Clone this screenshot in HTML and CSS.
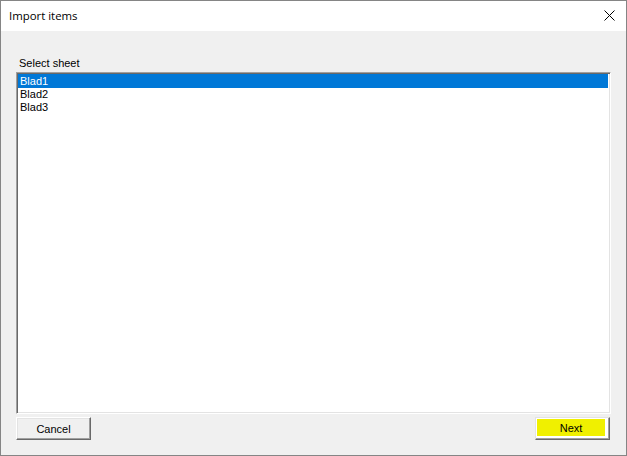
FILE: index.html
```html
<!DOCTYPE html>
<html>
<head>
<meta charset="utf-8">
<link rel="stylesheet" href="styles.css">
</head>
<body>
<div class="window">
  <div class="titlebar">
    <span class="title">Import items</span>
    <svg class="close" width="11" height="11" viewBox="0 0 11 11"><path d="M0.5 0.5 L10.5 10.5 M10.5 0.5 L0.5 10.5" stroke="#000" stroke-width="1" fill="none"/></svg>
  </div>
  <div class="client">
    <div class="label">Select sheet</div>
    <div class="listbox">
      <div class="item selected">Blad1</div>
      <div class="item">Blad2</div>
      <div class="item">Blad3</div>
    </div>
    <div class="buttons">
      <div class="btn">Cancel</div>
      <div class="btn next"><span class="face">Next</span></div>
    </div>
  </div>
</div>
</body>
</html>
```
FILE: styles.css
```css
html, body {
  margin: 0;
  padding: 0;
  background: #f0f0f0;
}
.window {
  width: 627px;
  height: 456px;
  box-sizing: border-box;
  border: 1px solid #858585;
  background: #f0f0f0;
  display: flex;
  flex-direction: column;
  font-family: "Liberation Sans", Arial, sans-serif;
}
.titlebar {
  height: 30px;
  background: #ffffff;
  display: flex;
  align-items: center;
  justify-content: space-between;
  padding: 0 11px 0 8px;
  flex-shrink: 0;
}
.title {
  font-family: "Open Sans", "Liberation Sans", sans-serif;
  font-size: 11.4px;
  color: #000;
  margin-top: -1px;
}
.close {
  display: block;
  margin-top: -1px;
}
.client {
  flex: 1;
  display: flex;
  flex-direction: column;
  padding: 25px 15px 0 15px;
  font-size: 11px;
  color: #000;
}
.label {
  padding-left: 3px;
  height: 16px;
  line-height: 14px;
}
.listbox {
  width: 595px;
  height: 342px;
  box-sizing: border-box;
  background: #fff;
  border-style: solid;
  border-width: 1px;
  border-color: #a0a0a0 #ffffff #ffffff #a0a0a0;
  box-shadow: inset 1px 1px 0 #696969, inset -1px -1px 0 #e3e3e3;
  padding: 1px 2px 2px 1px;
}
.item {
  height: 13px;
  line-height: 13px;
  padding-left: 2px;
}
.item.selected {
  background: #0078d7;
  color: #fff;
  height: 14px;
  line-height: 14px;
}
.buttons {
  display: flex;
  justify-content: space-between;
  margin-top: 3px;
  padding-right: 1px;
}
.btn {
  width: 75px;
  height: 23px;
  box-sizing: border-box;
  border-style: solid;
  border-width: 1px;
  border-color: #ffffff #696969 #696969 #ffffff;
  box-shadow: inset -1px -1px 0 #a0a0a0, inset 1px 1px 0 #e3e3e3;
  background: #f0f0f0;
  display: flex;
  align-items: center;
  justify-content: center;
  font-size: 11px;
}
.btn.next {
  border-color: #e3e3e3 #696969 #696969 #e3e3e3;
  box-shadow: inset -1px -1px 0 #a0a0a0;
  background: #ffffff;
  padding: 1px 4px 3px 1px;
}
.face {
  flex: 1;
  align-self: stretch;
  background: #f0f000;
  display: flex;
  align-items: center;
  justify-content: center;
}
```
